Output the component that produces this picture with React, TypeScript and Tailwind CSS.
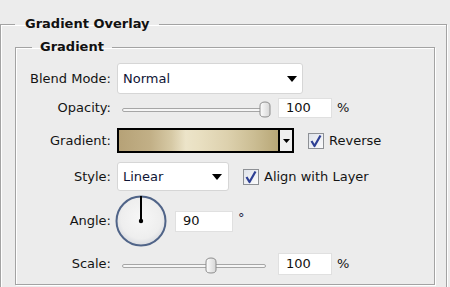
import React from "react";

const Arrow = ({ w = 10, h = 6 }: { w?: number; h?: number }) => (
  <svg width={w} height={h} viewBox={`0 0 ${w} ${h}`}>
    <polygon points={`0,0 ${w},0 ${w / 2},${h}`} fill="#000" />
  </svg>
);

const Thumb = () => (
  <svg width="14" height="17" viewBox="0 0 14 17">
    <defs>
      <linearGradient id="tg" x1="0" y1="0" x2="1" y2="0">
        <stop offset="0" stopColor="#fdfdfd" />
        <stop offset="1" stopColor="#d6d6d6" />
      </linearGradient>
    </defs>
    <path d="M2 5 Q2 1 7 1 Q12 1 12 5 L12 13 Q12 16 7 16 Q2 16 2 13 Z" fill="url(#tg)" stroke="#8c8c8c" strokeWidth="1" />
  </svg>
);

const Check = () => (
  <div className="w-[16px] h-[16px] border border-[#8d9095] bg-gradient-to-br from-[#dfe3ea] to-[#fbfbfc] flex items-center justify-center shrink-0">
    <svg width="14" height="14" viewBox="0 0 14 14">
      <path d="M2.5 7 L5.5 12 L11.5 1.5" fill="none" stroke="#2d3f94" strokeWidth="2.2" strokeLinejoin="round" />
    </svg>
  </div>
);

const Slider = ({ thumbLeft }: { thumbLeft: number }) => (
  <div className="relative w-[155px] h-[18px] mt-[3px]">
    <div className="absolute left-[5px] top-[7px] w-[144px] h-[4px] rounded-full border border-[#a6a6a6] bg-[#f6f6f6]" />
    <div className="absolute top-0" style={{ left: thumbLeft }}>
      <Thumb />
    </div>
  </div>
);

const Label = ({ children }: { children: React.ReactNode }) => (
  <div className="w-[95px] text-right shrink-0">{children}</div>
);

export default function App() {
  return (
    <div className="w-[450px] h-[287px] overflow-hidden bg-[#ececec] pt-[16px] font-['DejaVu_Sans',sans-serif] text-[13px] leading-[16px] text-[#141414]">
      <fieldset className="w-[447px] h-[300px] border border-[#a3a3a3] shadow-[inset_1px_1px_0_#fff,1px_1px_0_#fff]">
        <legend className="ml-[14px] px-[10px] font-bold leading-[16px] text-[#111]">Gradient Overlay</legend>
        <fieldset className="mt-[7px] ml-[14px] w-[420px] border border-[#a3a3a3] shadow-[inset_1px_1px_0_#fff,1px_1px_0_#fff] pb-[9px]">
          <legend className="ml-[16px] px-[8px] font-bold leading-[16px] text-[#111]">Gradient</legend>

          {/* Blend Mode */}
          <div className="flex items-center h-[31px] mt-[8px]">
            <Label>Blend Mode:</Label>
            <div className="ml-[6px] w-[186px] h-[31px] bg-white border border-[#d6d6d6] rounded-[3px] flex items-center pl-[5px] pr-[5px] text-[#0f1535]">
              <span className="flex-1">Normal</span>
              <Arrow />
            </div>
          </div>

          {/* Opacity */}
          <div className="flex items-center h-[22px] mt-[3px]">
            <Label>Opacity:</Label>
            <div className="ml-[6px]">
              <Slider thumbLeft={141} />
            </div>
            <div className="ml-[6px] w-[54px] h-[20px] bg-white border border-[#e0e0e0] flex items-center pl-[7px] text-[#111]">100</div>
            <span className="ml-[5px]">%</span>
          </div>

          {/* Gradient */}
          <div className="flex items-center h-[25px] mt-[9px]">
            <Label>Gradient:</Label>
            <div className="ml-[6px] w-[177px] h-[25px] border-2 border-black flex">
              <div className="flex-1 bg-[linear-gradient(to_right,#b6a277_0%,#c2b087_20%,#d6c9a5_33%,#ece4c9_42%,#e9e0c2_50%,#ddd1ae_68%,#cbbd93_85%,#b8a777_100%)]" />
              <div className="w-[14px] border-l-2 border-black bg-[#efefef] flex items-center justify-center">
                <Arrow w={7} h={4} />
              </div>
            </div>
            <div className="ml-[14px]">
              <Check />
            </div>
            <span className="ml-[5px]">Reverse</span>
          </div>

          {/* Style */}
          <div className="flex items-center h-[29px] mt-[9px]">
            <Label>Style:</Label>
            <div className="ml-[6px] w-[112px] h-[29px] bg-white border border-[#d6d6d6] rounded-[3px] flex items-center pl-[5px] pr-[6px] text-[#0f1535]">
              <span className="flex-1">Linear</span>
              <Arrow />
            </div>
            <div className="ml-[14px]">
              <Check />
            </div>
            <span className="ml-[5px]">Align with Layer</span>
          </div>

          {/* Angle */}
          <div className="flex items-center h-[52px] mt-[4px]">
            <Label>Angle:</Label>
            <div className="ml-[4px] w-[52px] h-[52px] shrink-0">
              <svg width="52" height="52" viewBox="0 0 52 52">
                <defs>
                  <radialGradient id="cg" cx="0.5" cy="0.45" r="0.55">
                    <stop offset="0" stopColor="#f7f7f7" />
                    <stop offset="0.75" stopColor="#eeeeee" />
                    <stop offset="1" stopColor="#d9dbe0" />
                  </radialGradient>
                </defs>
                <circle cx="26" cy="26" r="24.5" fill="url(#cg)" stroke="#506488" strokeWidth="2" />
                <line x1="26" y1="26" x2="26" y2="1" stroke="#000" strokeWidth="2" />
                <circle cx="26" cy="26" r="2.2" fill="#000" />
              </svg>
            </div>
            <div className="ml-[8px] w-[58px] h-[21px] bg-white border border-[#e0e0e0] flex items-center pl-[7px] text-[#111]">90</div>
            <span className="ml-[5px] self-start mt-[15px] text-[#1a2244]">°</span>
          </div>

          {/* Scale */}
          <div className="flex items-center h-[22px] mt-[6px]">
            <Label>Scale:</Label>
            <div className="ml-[6px]">
              <Slider thumbLeft={87} />
            </div>
            <div className="ml-[6px] w-[54px] h-[22px] bg-white border border-[#e0e0e0] flex items-center pl-[7px] text-[#111]">100</div>
            <span className="ml-[5px]">%</span>
          </div>
        </fieldset>
      </fieldset>
    </div>
  );
}
